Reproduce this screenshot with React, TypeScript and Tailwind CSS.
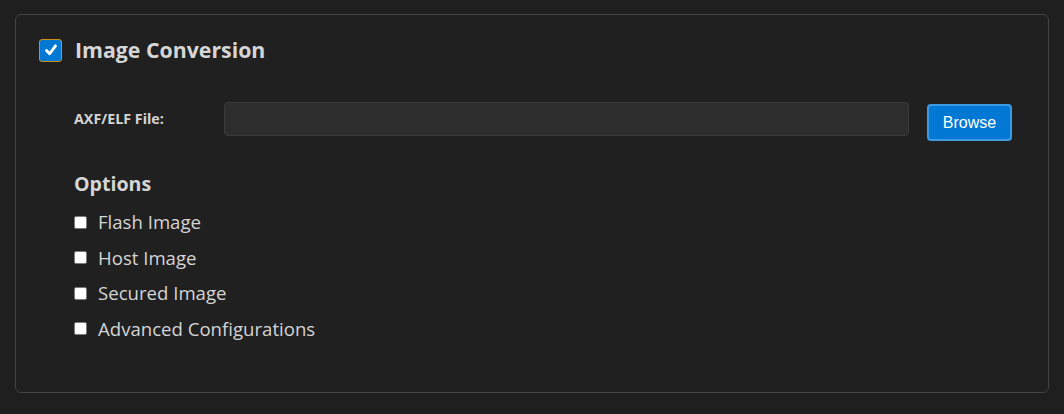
import React, { useState } from 'react';

const options = ['Flash Image', 'Host Image', 'Secured Image', 'Advanced Configurations'];

const SmallBox = ({ checked, onClick }: { checked: boolean; onClick: () => void }) => (
  <button
    onClick={onClick}
    className="w-[13px] h-[13px] bg-white border border-[#7a7a7a] rounded-[2px] flex items-center justify-center shrink-0"
  >
    {checked && (
      <svg width="9" height="9" viewBox="0 0 10 10">
        <path d="M1.5 5.2 L4 7.6 L8.6 2.2" fill="none" stroke="#222" strokeWidth="1.6" />
      </svg>
    )}
  </button>
);

export default function App() {
  const [enabled, setEnabled] = useState(true);
  const [checks, setChecks] = useState([false, false, false, false]);

  return (
    <div
      className="w-[1064px] h-[414px] bg-[#1f1f1f] pt-[14px] pl-[15px]"
      style={{ fontFamily: '"Open Sans", "Noto Sans", sans-serif' }}
    >
      <div className="w-[1034px] h-[379px] border border-[#444444] rounded-[6px] bg-[#202020] pt-[24px] pl-[23px]">
        {/* Header */}
        <div className="flex items-center h-[22px]">
          <button
            onClick={() => setEnabled(!enabled)}
            className="w-[23px] h-[23px] rounded-[3px] bg-[#0078d4] border border-[#c8901e] flex items-center justify-center"
          >
            {enabled && (
              <svg width="14" height="14" viewBox="0 0 14 14">
                <path d="M2.5 7.5 L5.6 10.8 L11.5 2.8" fill="none" stroke="#fff" strokeWidth="2.8" strokeLinecap="round" strokeLinejoin="round" />
              </svg>
            )}
          </button>
          <h1 className="ml-[13px] text-[21.3px] font-bold text-[#d6d6d6] leading-none">Image Conversion</h1>
        </div>

        <div className="pl-[35px]">
          {/* File row */}
          <div className="flex items-start mt-[41px]">
            <label className="w-[150px] text-[14.3px] font-bold text-[#d4d4d4] mt-[6px]">AXF/ELF File:</label>
            <input
              type="text"
              className="w-[685px] h-[34px] bg-[#2d2d2d] border border-[#3b3b3b] rounded-[4px] outline-none px-2 text-[#ddd] text-sm"
            />
            <button
              className="ml-[18px] mt-[2px] w-[85px] h-[37px] bg-[#0078d4] border-2 border-[#3e9be3] rounded-[4px] text-white text-[16px]"
              style={{ fontFamily: '"Liberation Sans", Arial, sans-serif' }}
            >
              Browse
            </button>
          </div>

          {/* Options */}
          <h2 className="mt-[33px] text-[19.6px] font-bold text-[#d6d6d6] leading-none">Options</h2>
          <div className="mt-[11px] flex flex-col">
            {options.map((o, i) => (
              <div key={o} className="flex items-center h-[35.5px]">
                <SmallBox
                  checked={checks[i]}
                  onClick={() => setChecks(checks.map((c, j) => (j === i ? !c : c)))}
                />
                <span className="ml-[11px] text-[18.6px] text-[#d4d4d4] leading-none">{o}</span>
              </div>
            ))}
          </div>
        </div>
      </div>
    </div>
  );
}
